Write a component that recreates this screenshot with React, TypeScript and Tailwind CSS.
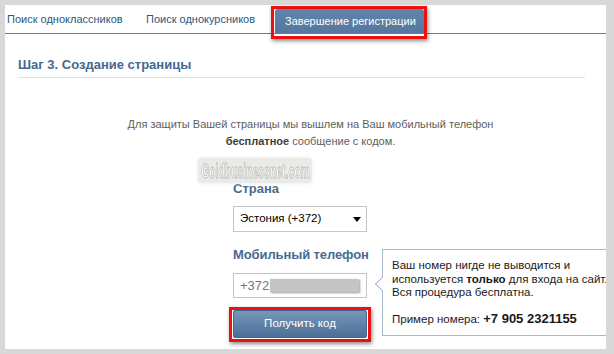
import React from "react"

const font = { fontFamily: '"Liberation Sans", Arial, sans-serif' }

// ── Tabs ──────────────────────────────────────────────────────────────────────
function Tabs() {
  return (
    <div className="flex items-end h-[29px] border-b border-[#5f7fa4] text-[11px] whitespace-nowrap">
      <div className="w-[141px] pl-[2px] pb-[6px] text-[#2b587a]">Поиск одноклассников</div>
      <div className="w-[129px] pb-[6px] text-[#2b587a]">Поиск однокурсников</div>
      <div className="relative">
        <div className="w-[149px] h-[24px] pl-[10px] flex items-center bg-gradient-to-b from-[#6285ab] to-[#54779e] text-white rounded-t-[2px]">
          Завершение регистрации
        </div>
        {/* red highlight */}
        <div className="absolute left-[-4px] right-[-3px] top-[-3px] bottom-[-6px] border-[3px] border-[#ec1111] shadow-[1px_2px_4px_rgba(0,0,0,0.45)]" />
      </div>
    </div>
  )
}

// ── Tooltip ───────────────────────────────────────────────────────────────────
function Hint() {
  return (
    <div className="absolute left-[377px] top-[244px] w-[240px] h-[87px] bg-white border border-[#a9b9ca] pl-[9px] pt-[9px] text-[11.5px] leading-[13.5px] text-[#1a1a1a] whitespace-nowrap">
      <div className="absolute left-[-6px] top-[29px] w-[10px] h-[10px] bg-white border-l border-b border-[#a9b9ca] rotate-45" />
      <p>Ваш номер нигде не выводится и</p>
      <p>используется <b>только</b> для входа на сайт.</p>
      <p>Вся процедура бесплатна.</p>
      <p className="mt-[12px]">
        Пример номера: <b className="text-[13px]">+7 905 2321155</b>
      </p>
    </div>
  )
}

export default function App() {
  return (
    <div className="w-[614px] h-[354px] bg-[#d8d8d8] pt-[5px] pl-[5px] pr-[8px] pb-[5px]" style={font}>
      <div className="relative h-full bg-white overflow-hidden">
        <Tabs />

        {/* ── Step heading ── */}
        <div className="mt-[23px] ml-[13px] mr-[21px] pb-[4px] border-b border-[#dae1e8] text-[13px] leading-[16px] font-bold text-[#45688e]">
          Шаг 3. Создание страницы
        </div>

        <div className="mt-[38px] text-center text-[11px] leading-[17px] text-[#606060] pl-[10px]">
          <p>Для защиты Вашей страницы мы вышлем на Ваш мобильный телефон</p>
          <p><b className="text-[#3d3d3d]">бесплатное</b> сообщение с кодом.</p>
        </div>

        {/* watermark */}
        <div className="absolute left-[193px] top-[153px] w-[114px] h-[25px] flex items-center justify-center bg-[#eaeae8] rounded-[3px] shadow-[0_0_4px_#eaeae8]">
          <span
            className="text-[20px] leading-[20px] font-bold text-[#f7f7f7] scale-x-[0.52] whitespace-nowrap"
            style={{ WebkitTextStroke: "0.8px #b7b7b2" }}
          >
            Goldbusinessnet.com
          </span>
        </div>

        {/* ── Form ── */}
        <div className="ml-[228px] w-[134px] mt-[31px]">
          <div className="text-[13px] leading-[16px] font-bold text-[#4a6b8f]">Страна</div>
          <div className="mt-[9px] h-[26px] border border-[#c5c5c5] flex items-center justify-between pl-[6px] pr-[5px] text-[11.5px] text-black">
            <span>Эстония (+372)</span>
            <span className="w-0 h-0 border-l-[4px] border-r-[4px] border-t-[5px] border-l-transparent border-r-transparent border-t-black" />
          </div>

          <div className="mt-[15px] text-[13px] leading-[16px] font-bold text-[#4a6b8f] tracking-[-0.1px] whitespace-nowrap">Мобильный телефон</div>
          <div className="mt-[10px] h-[25px] border border-[#c5c5c5] flex items-center pl-[6px] text-[13px] text-[#777]">
            <span>+372</span>
            <span className="ml-[1px] w-[89px] h-[13px] bg-[#c4c4c4] blur-[0.6px] shadow-[1px_1px_2px_#999]" />
          </div>

          <div className="relative mt-[12px]">
            <div className="h-[28px] flex items-center justify-center rounded-[2px] border border-[#45668d] bg-gradient-to-b from-[#7597bb] to-[#4c6f97] text-white text-[11.5px]">
              Получить код
            </div>
            <div className="absolute left-[-4px] right-[-4px] top-[-3px] bottom-[-4px] border-[3px] border-[#ec1111] shadow-[1px_2px_4px_rgba(0,0,0,0.45)]" />
          </div>
        </div>

        <Hint />
      </div>
    </div>
  )
}
